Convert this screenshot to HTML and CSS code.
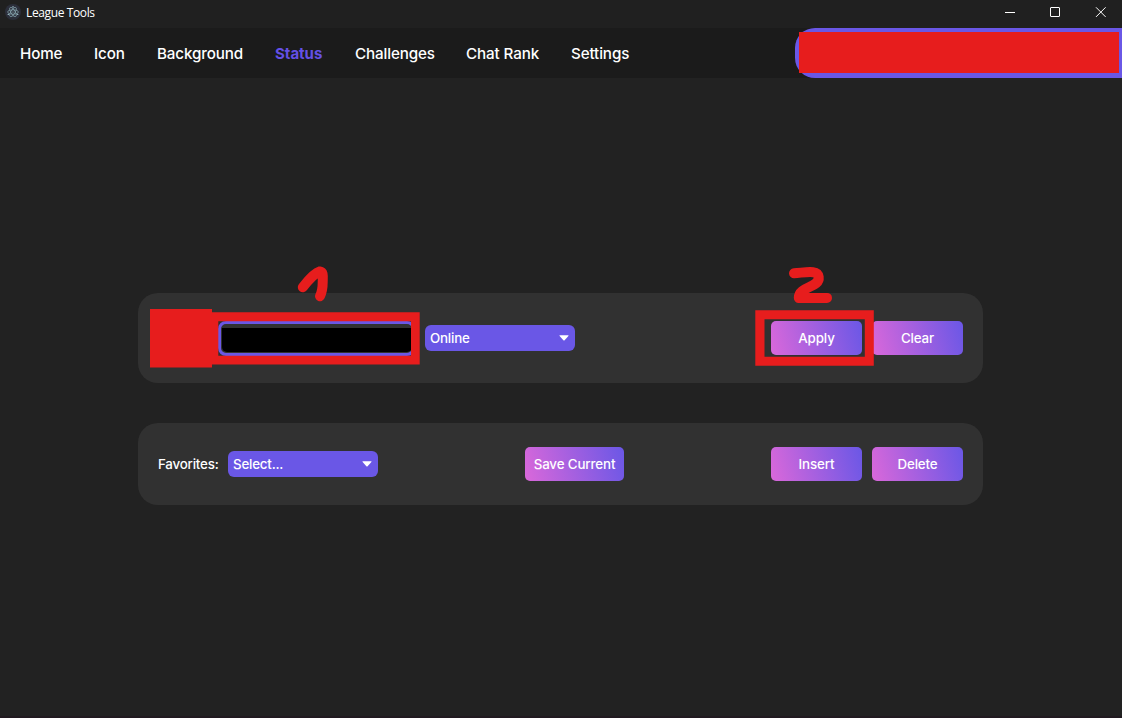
FILE: index.html
```html
<!DOCTYPE html>
<html lang="en">
<head>
<meta charset="utf-8">
<title>League Tools</title>
<link rel="stylesheet" href="styles.css">
</head>
<body>
<div class="window">
  <header class="titlebar">
    <svg class="app-icon" viewBox="0 0 16 16" width="16" height="16">
      <circle cx="8" cy="8" r="8" fill="#2b2e3a"/>
      <g fill="none" stroke="#8fb0ba" stroke-width=".65">
        <ellipse cx="8" cy="8" rx="5.3" ry="2.1"/>
        <ellipse cx="8" cy="8" rx="5.3" ry="2.1" transform="rotate(60 8 8)"/>
        <ellipse cx="8" cy="8" rx="5.3" ry="2.1" transform="rotate(120 8 8)"/>
      </g>
      <g fill="#9fbfc8"><circle cx="8" cy="8" r=".6"/><circle cx="3.3" cy="10.4" r=".7"/><circle cx="12.7" cy="10.4" r=".7"/><circle cx="8" cy="2.7" r=".7"/></g>
    </svg>
    <span class="app-title">League Tools</span>
    <div class="window-controls">
      <svg width="46" height="26" viewBox="0 0 46 26"><path d="M18 12.5h10" stroke="#fff"/></svg>
      <svg width="46" height="26" viewBox="0 0 46 26"><rect x="17.500" y="7.500" width="9" height="9" rx=".5" fill="none" stroke="#fff"/></svg>
      <svg width="46" height="26" viewBox="0 0 46 26"><path d="M17 7.300l9.600 9.600M26.600 7.300l-9.600 9.600" stroke="#fff" fill="none"/></svg>
    </div>
  </header>
  <nav class="nav">
    <a class="home">Home</a>
    <a class="icon">Icon</a>
    <a class="background">Background</a>
    <a class="status active">Status</a>
    <a class="challenges">Challenges</a>
    <a class="rank">Chat Rank</a>
    <a class="settings">Settings</a>
    <div class="profile"><div class="redaction"></div></div>
  </nav>
  <main class="content">
    <section class="panel status-panel">
      <div class="status-input"><div class="input-value"></div></div>
      <div class="select">Online<svg width="10" height="6" viewBox="0 0 10 6"><path d="M.8.3h8.400q.6.3.2.800L5.600 5.200q-.6.5-1.200 0L.6 1.100q-.4-.5.2-.8z" fill="#fff"/></svg></div>
      <div class="actions"><button>Apply</button><button>Clear</button></div>
    </section>
    <section class="panel favorites-panel">
      <span class="label">Favorites:</span>
      <div class="select">Select...<svg width="10" height="6" viewBox="0 0 10 6"><path d="M.8.3h8.400q.6.3.2.800L5.600 5.200q-.6.5-1.200 0L.6 1.100q-.4-.5.2-.8z" fill="#fff"/></svg></div>
      <button class="save">Save Current</button>
      <div class="actions"><button>Insert</button><button>Delete</button></div>
    </section>
  </main>
  <svg class="markup" width="1122" height="718" viewBox="0 0 1122 718">
    <g fill="#e71d1d" fill-rule="evenodd">
      <path d="M150 309h62v58.500h-62z"/>
      <path d="M211 312.200h208.700v52.300H211zM218.300 321.300v34.500H411v-34.500z"/>
      <path d="M755.300 310.200h118.500v55.600H755.300zM764.500 319.200v37.600H864.800v-37.600z"/>
    </g>
    <g fill="none" stroke="#e71d1d" stroke-width="10" stroke-linecap="round" stroke-linejoin="round">
      <path d="M302.800 287.300C308 280.500 315 272.800 320 271.400C323.500 271.800 322.800 276 322.700 282C322.700 288 322 292 320 296.200"/>
      <path d="M794 273.200C806 272.500 817.500 269.500 818.700 277C820 288 799 286 798.800 297.900H827"/>
    </g>
  </svg>
</div>
</body>
</html>
```

FILE: styles.css
```css
* { box-sizing: border-box; }
body { margin: 0; background: #222; color: #fff; font-family: Inter, sans-serif; }
.window { position: relative; width: 1122px; height: 718px; overflow: hidden; display: flex; flex-direction: column; border-bottom: 2px solid #211a20; }
.titlebar { height: 28px; background: #202020; display: flex; align-items: flex-start; padding-left: 5px; flex: none; }
.app-icon { margin-top: 4px; }
.app-title { font: 12px/16px "Open Sans", sans-serif; margin: 5px 0 0 5px; letter-spacing: -.38px; }
.window-controls { display: flex; margin-left: auto; margin-right: -3px; }
.nav { height: 50px; flex: none; background: #1b1b1b; display: flex; align-items: center; padding-left: 20px; font-size: 15.2px; font-weight: 450; letter-spacing: -.12px; line-height: 20px; }
.nav a { white-space: nowrap; flex: none; padding-top: 2px; }
.home { width: 74px; }
.icon { width: 63px; }
.background { width: 118px; }
.status { width: 80px; }
.challenges { width: 111px; }
.rank { width: 105px; }
.nav .active { color: #6450e6; font-weight: 700; font-size: 15px; letter-spacing: 0; }
.profile { margin-left: auto; width: 327px; height: 50px; border-radius: 20px 0 0 20px; background: #6a57e6; padding: 4px 3px 5px 4px; }
.redaction { height: 41px; background: #e71d1d; }
.content { flex: 1; padding: 215px 139px 0 138px; display: flex; flex-direction: column; gap: 40px; font-size: 13.333px; font-weight: 450; letter-spacing: -.2px; }
.panel { display: flex; align-items: center; background: #313131; border-radius: 20px; padding: 0 20px; }
.status-panel { height: 90px; padding-left: 80px; }
.favorites-panel { height: 82px; }
.label { width: 60px; white-space: nowrap; }
.status-input { width: 197px; height: 35px; border: 3px solid #6a57e6; border-radius: 8px; padding: 4px 0 0 1px; }
.input-value { height: 24px; background: #000; border-radius: 0 0 5px 5px; }
.select { width: 150px; height: 26px; border-radius: 6px; background: #6a57e6; display: flex; align-items: center; justify-content: space-between; padding: 0 6.5px 0 5px; margin-left: 10px; }
.actions { margin-left: auto; display: flex; gap: 10px; }
button { width: 91px; height: 34px; border: 0; border-radius: 5px; padding: 0; color: #fff; background: linear-gradient(75deg, #da68da, #6a57e6); font: 450 13.333px Inter, sans-serif; letter-spacing: -.12px; }
.save { width: 99px; margin-left: 147px; }
.markup { position: absolute; inset: 0; pointer-events: none; }
```
